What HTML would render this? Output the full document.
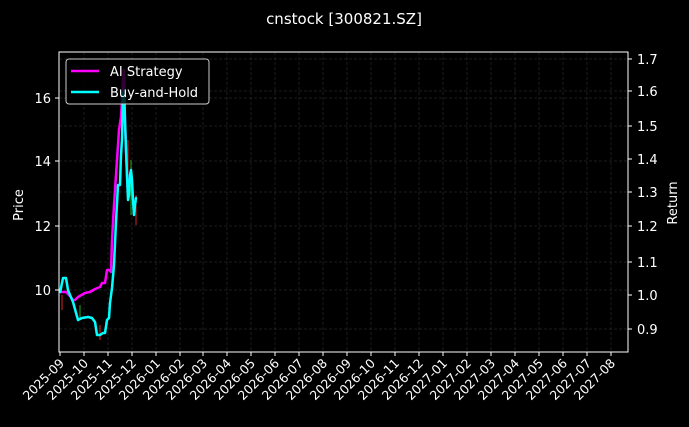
<!DOCTYPE html>
<html><head><style>
body{margin:0;background:#000;width:689px;height:422px;overflow:hidden;font-family:"Liberation Sans","DejaVu Sans",sans-serif}
</style></head><body>
<svg width="689" height="422" viewBox="0 0 689 422" xmlns="http://www.w3.org/2000/svg" font-family="DejaVu Sans, Liberation Sans, sans-serif" fill="#fff">
<rect width="689" height="422" fill="#000"/>
<text x="344" y="24" font-size="15" text-anchor="middle">cnstock [300821.SZ]</text>
<g stroke="#3a3a3a" stroke-width="0.5" stroke-dasharray="3,2">
<line x1="59" x2="628" y1="98" y2="98"/><line x1="59" x2="628" y1="161" y2="161"/><line x1="59" x2="628" y1="226" y2="226"/><line x1="59" x2="628" y1="290" y2="290"/>
<line x1="59" x2="628" y1="59" y2="59"/><line x1="59" x2="628" y1="91" y2="91"/><line x1="59" x2="628" y1="126" y2="126"/><line x1="59" x2="628" y1="192" y2="192"/><line x1="59" x2="628" y1="262" y2="262"/><line x1="59" x2="628" y1="329" y2="329"/>
<line x1="84" x2="84" y1="52" y2="352"/><line x1="108" x2="108" y1="52" y2="352"/><line x1="132" x2="132" y1="52" y2="352"/><line x1="156" x2="156" y1="52" y2="352"/><line x1="180" x2="180" y1="52" y2="352"/><line x1="203" x2="203" y1="52" y2="352"/><line x1="227" x2="227" y1="52" y2="352"/><line x1="251" x2="251" y1="52" y2="352"/><line x1="275" x2="275" y1="52" y2="352"/><line x1="299" x2="299" y1="52" y2="352"/><line x1="323" x2="323" y1="52" y2="352"/><line x1="347" x2="347" y1="52" y2="352"/><line x1="371" x2="371" y1="52" y2="352"/><line x1="395" x2="395" y1="52" y2="352"/><line x1="419" x2="419" y1="52" y2="352"/><line x1="443" x2="443" y1="52" y2="352"/><line x1="467" x2="467" y1="52" y2="352"/><line x1="491" x2="491" y1="52" y2="352"/><line x1="515" x2="515" y1="52" y2="352"/><line x1="539" x2="539" y1="52" y2="352"/><line x1="563" x2="563" y1="52" y2="352"/><line x1="587" x2="587" y1="52" y2="352"/><line x1="611" x2="611" y1="52" y2="352"/>
</g>
<g stroke-width="1">
<line x1="62" x2="62" y1="295" y2="310" stroke="#d22"/><line x1="80" x2="80" y1="305" y2="318" stroke="#2a2"/><line x1="100" x2="100" y1="325" y2="340" stroke="#d22"/><line x1="128" x2="128" y1="140" y2="175" stroke="#d22"/><line x1="131" x2="131" y1="160" y2="215" stroke="#2a2"/><line x1="136" x2="136" y1="195" y2="225" stroke="#d22"/>
</g>
<polyline fill="none" stroke="#ff00ff" stroke-width="2.5" stroke-linejoin="round" points="60,292 66,292 70,296 73,300 75,300 78,297 85,293 90,292 95,289 100,287 102,283 105,283 107,270 109,270 111,272 112,240 114,205 116,175 117,160 119,130 121,117 122,100 123,80 124,70 125,120 126,150 127,175 128,195"/>
<polyline fill="none" stroke="#00ffff" stroke-width="2.5" stroke-linejoin="round" points="60,293 63,278 66,278 68,290 70,295 73,302 78,320 82,318 88,317 92,318 95,322 97,335 100,335 103,333 105,333 107,320 109,318 110,303 112,288 114,265 116,222 118,185 120,185 121,155 122,140 123,95 124,90 125,120 126,150 127,175 128,200 129,195 130,175 131,170 132,180 133,200 134,215 135,205 136,198 137,198"/>
<rect x="59" y="52" width="569" height="300" fill="none" stroke="#fff" stroke-width="1"/>
<g stroke="#fff" stroke-width="1">
<line x1="55" x2="59" y1="98" y2="98"/><line x1="55" x2="59" y1="161" y2="161"/><line x1="55" x2="59" y1="226" y2="226"/><line x1="55" x2="59" y1="290" y2="290"/>
<line x1="628" x2="632" y1="59" y2="59"/><line x1="628" x2="632" y1="91" y2="91"/><line x1="628" x2="632" y1="126" y2="126"/><line x1="628" x2="632" y1="159" y2="159"/><line x1="628" x2="632" y1="192" y2="192"/><line x1="628" x2="632" y1="226" y2="226"/><line x1="628" x2="632" y1="262" y2="262"/><line x1="628" x2="632" y1="295" y2="295"/><line x1="628" x2="632" y1="329" y2="329"/>
</g>
<g font-size="13" text-anchor="end">
<text x="51" y="103">16</text><text x="51" y="166">14</text><text x="51" y="231">12</text><text x="51" y="295">10</text>
</g>
<g font-size="13">
<text x="637" y="64">1.7</text><text x="637" y="96">1.6</text><text x="637" y="131">1.5</text><text x="637" y="164">1.4</text><text x="637" y="197">1.3</text><text x="637" y="231">1.2</text><text x="637" y="267">1.1</text><text x="637" y="300">1.0</text><text x="637" y="334">0.9</text>
</g>
<text transform="translate(23,205) rotate(-90)" font-size="13" text-anchor="middle">Price</text>
<text transform="translate(677,203) rotate(-90)" font-size="13" text-anchor="middle">Return</text>
<g font-size="12.5" text-anchor="end">
<text transform="translate(65,364) rotate(-45)">2025-09</text><text transform="translate(89,364) rotate(-45)">2025-10</text><text transform="translate(113,364) rotate(-45)">2025-11</text><text transform="translate(137,364) rotate(-45)">2025-12</text><text transform="translate(161,364) rotate(-45)">2026-01</text><text transform="translate(185,364) rotate(-45)">2026-02</text><text transform="translate(208,364) rotate(-45)">2026-03</text><text transform="translate(232,364) rotate(-45)">2026-04</text><text transform="translate(256,364) rotate(-45)">2026-05</text><text transform="translate(280,364) rotate(-45)">2026-06</text><text transform="translate(304,364) rotate(-45)">2026-07</text><text transform="translate(328,364) rotate(-45)">2026-08</text><text transform="translate(352,364) rotate(-45)">2026-09</text><text transform="translate(376,364) rotate(-45)">2026-10</text><text transform="translate(400,364) rotate(-45)">2026-11</text><text transform="translate(424,364) rotate(-45)">2026-12</text><text transform="translate(448,364) rotate(-45)">2027-01</text><text transform="translate(472,364) rotate(-45)">2027-02</text><text transform="translate(496,364) rotate(-45)">2027-03</text><text transform="translate(520,364) rotate(-45)">2027-04</text><text transform="translate(544,364) rotate(-45)">2027-05</text><text transform="translate(568,364) rotate(-45)">2027-06</text><text transform="translate(592,364) rotate(-45)">2027-07</text><text transform="translate(616,364) rotate(-45)">2027-08</text>
</g>
<g stroke="#fff" stroke-width="1"><line x1="60" x2="60" y1="352" y2="356"/><line x1="84" x2="84" y1="352" y2="356"/><line x1="108" x2="108" y1="352" y2="356"/><line x1="132" x2="132" y1="352" y2="356"/><line x1="156" x2="156" y1="352" y2="356"/><line x1="180" x2="180" y1="352" y2="356"/><line x1="203" x2="203" y1="352" y2="356"/><line x1="227" x2="227" y1="352" y2="356"/><line x1="251" x2="251" y1="352" y2="356"/><line x1="275" x2="275" y1="352" y2="356"/><line x1="299" x2="299" y1="352" y2="356"/><line x1="323" x2="323" y1="352" y2="356"/><line x1="347" x2="347" y1="352" y2="356"/><line x1="371" x2="371" y1="352" y2="356"/><line x1="395" x2="395" y1="352" y2="356"/><line x1="419" x2="419" y1="352" y2="356"/><line x1="443" x2="443" y1="352" y2="356"/><line x1="467" x2="467" y1="352" y2="356"/><line x1="491" x2="491" y1="352" y2="356"/><line x1="515" x2="515" y1="352" y2="356"/><line x1="539" x2="539" y1="352" y2="356"/><line x1="563" x2="563" y1="352" y2="356"/><line x1="587" x2="587" y1="352" y2="356"/><line x1="611" x2="611" y1="352" y2="356"/></g>
<rect x="66" y="59" width="143" height="45" rx="3" fill="#000" fill-opacity="0.8" stroke="#ccc" stroke-width="1"/>
<line x1="71" x2="99" y1="71" y2="71" stroke="#ff00ff" stroke-width="2.5"/>
<line x1="71" x2="99" y1="92" y2="92" stroke="#00ffff" stroke-width="2.5"/>
<text x="110" y="76" font-size="13">AI Strategy</text>
<text x="110" y="97" font-size="13">Buy-and-Hold</text>
</svg>
</body></html>
